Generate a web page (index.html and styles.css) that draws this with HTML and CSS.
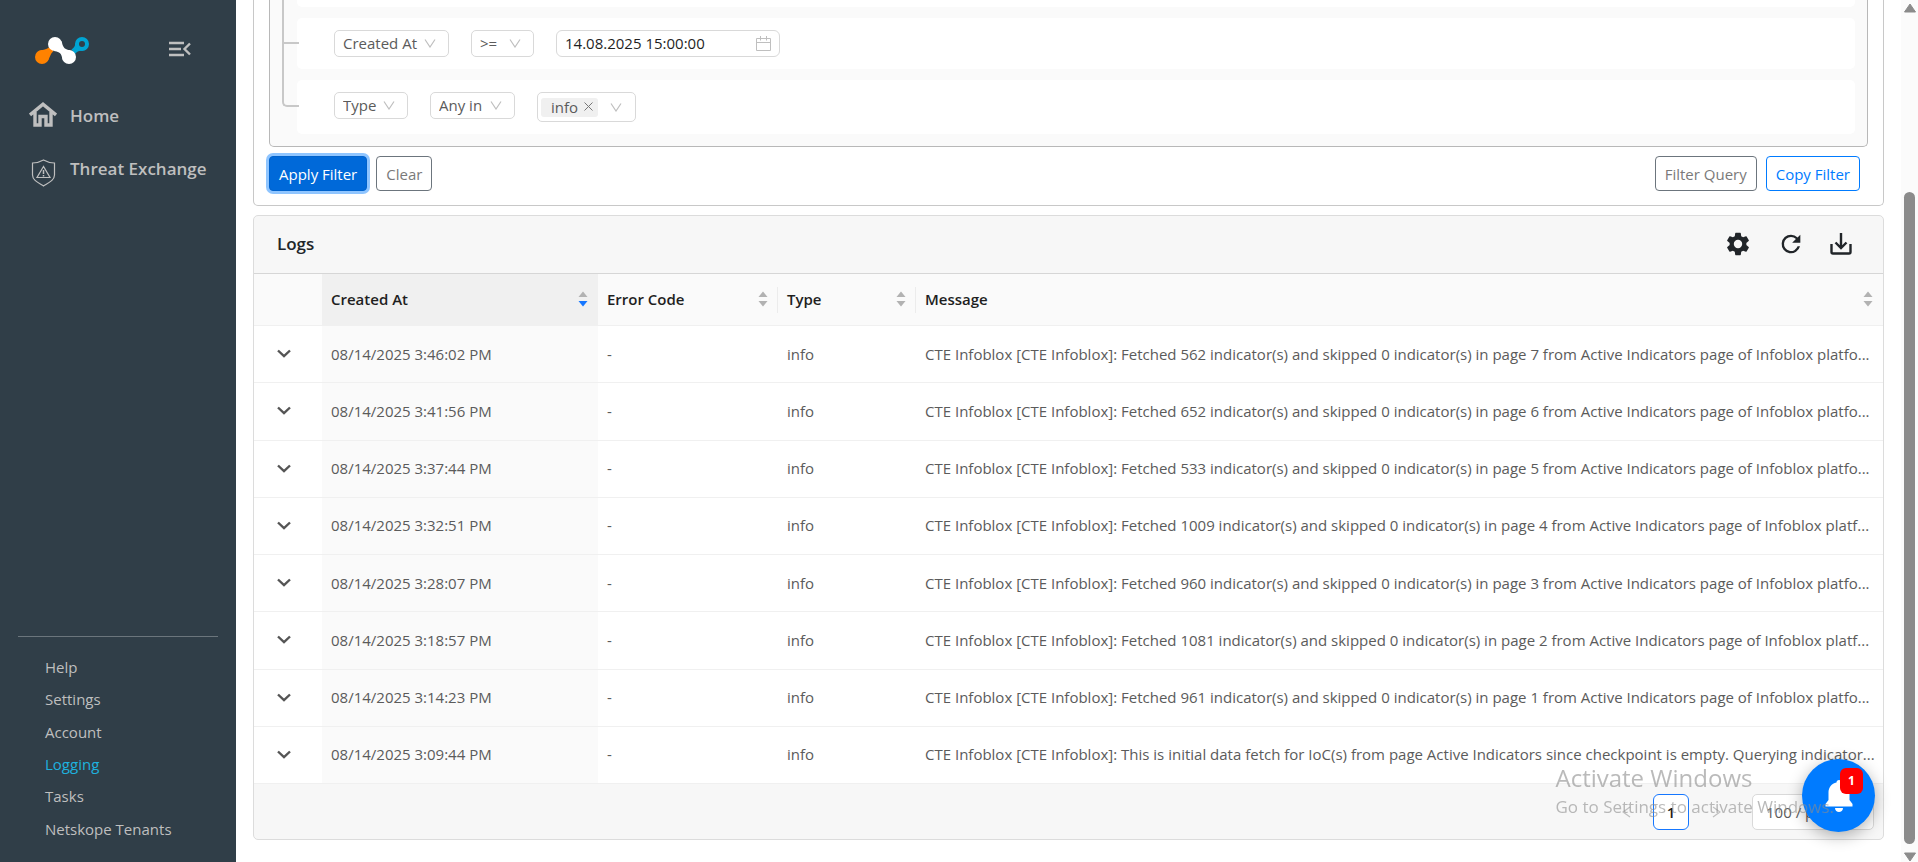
FILE: index.html
```html
<!DOCTYPE html>
<html lang="en">
<head>
  <meta charset="utf-8">
  <title>Logging</title>
  <link rel="stylesheet" href="styles.css">
</head>
<body>
  <svg class="defs" aria-hidden="true">
    <symbol id="chevron" viewBox="0 0 14 9"><path d="M1 1.500L7 7.200L13 1.500" fill="none" stroke="#555" stroke-width="2.400"/></symbol>
    <symbol id="sorter" viewBox="0 0 10 16"><path class="up" d="M5 0.500L9.500 6H0.500Z"/><path class="down" d="M5 15.500L9.500 10H0.500Z"/></symbol>
  </svg>

  <div class="layout">
    <aside class="sidebar">
      <div class="brand">
        <svg class="logo" width="54" height="27" viewBox="0 0 54 27">
          <path d="M3 15C7 12 11 13.500 14.500 10L18.500 14C15 17 15.500 20 12 24.500Z" fill="#ff8200"/>
          <circle cx="7" cy="20" r="7" fill="#ff8200"/>
          <path d="M36.500 12.500C40.500 10 40 7 42 3L51 12C47 15 44 12 40 17Z" fill="#00a4d3"/>
          <circle cx="47" cy="7" r="7" fill="#00a4d3"/>
          <circle cx="47" cy="7" r="3" fill="#303e48"/>
          <path d="M26.500 4C28 9 28 12 35 13.500L40.500 20L28 23C26 18 27 15 19 14Z" fill="#fff"/>
          <circle cx="20" cy="7" r="7" fill="#fff"/>
          <circle cx="34" cy="20" r="7" fill="#fff"/>
        </svg>
        <button class="icon-button" aria-label="Collapse menu">
          <svg width="22" height="16" viewBox="0 0 22 16" fill="none" stroke="#bfbfbf" stroke-width="2.400"><path d="M0 2H15M0 8H12M0 14H15M21 2.500L15.500 8L21 13.500"/></svg>
        </button>
      </div>

      <nav class="main-nav">
        <a href="#home">
          <svg width="28" height="26" viewBox="0 0 28 26" fill="none" stroke="#bfbfbf" stroke-width="3.400"><path d="M1 13L14 2.300L27 13M6 10V23H11V14.500H17V23H22V10"/></svg>
          Home
        </a>
        <a href="#threat-exchange" class="threat">
          <svg width="28" height="28" viewBox="0 0 28 28" fill="none" stroke="#bfbfbf" stroke-width="1.200"><path d="M14.500 1C11 3 7 4 3.500 4V16C3.500 21 9 23.500 14.500 27C20 23.500 25.500 21 25.500 16V4C22 4 18 3 14.500 1ZM14.500 7.500L8 18.500H21Z"/><path d="M14.500 11V15M14.500 16V17.500" stroke-width="1.500"/></svg>
          Threat Exchange
        </a>
      </nav>

      <nav class="sub-nav">
        <a href="#help">Help</a>
        <a href="#settings">Settings</a>
        <a href="#account">Account</a>
        <a href="#logging" class="active">Logging</a>
        <a href="#tasks">Tasks</a>
        <a href="#tenants">Netskope Tenants</a>
      </nav>
    </aside>

    <main class="content">
      <section class="filter-card">
        <div class="rule-group">
          <div class="rule rule-cut"></div>
          <div class="rule">
            <select class="field-select" aria-label="Field"><option>Created At</option></select>
            <select class="operator-select" aria-label="Operator"><option>&gt;=</option></select>
            <div class="date-picker">
              <input type="text" value="14.08.2025 15:00:00" aria-label="Date">
              <svg width="15" height="15" viewBox="0 0 15 15" fill="none" stroke="#bfbfbf"><path d="M0.500 2.500H14.500V14.500H0.500ZM0.500 6.500H14.500M4.500 0V4.500M10.500 0V4.500"/></svg>
            </div>
          </div>
          <div class="rule rule-last">
            <select class="type-select" aria-label="Field"><option>Type</option></select>
            <select class="any-select" aria-label="Operator"><option>Any in</option></select>
            <div class="multi-select">
              <span class="tag">info
                <button aria-label="Remove info"><svg width="9" height="9" viewBox="0 0 9 9" fill="none" stroke="#777"><path d="M0.500 0.500L8.500 8.500M8.500 0.500L0.500 8.500"/></svg></button>
              </span>
              <svg width="12" height="9" viewBox="0 0 12 9" fill="none" stroke="#bfbfbf" stroke-width="1.200"><path d="M1 0.500L6 8L11 0.500"/></svg>
            </div>
          </div>
        </div>
        <div class="filter-actions">
          <button class="btn btn-primary">Apply Filter</button>
          <button class="btn">Clear</button>
          <button class="btn btn-query">Filter Query</button>
          <button class="btn btn-outline-primary">Copy Filter</button>
        </div>
      </section>

      <section class="logs-card">
        <header class="logs-header">
          <h2>Logs</h2>
          <div class="logs-tools">
            <button class="icon-button" aria-label="Table settings">
              <svg width="28" height="28" viewBox="0 0 24 24" fill="#212529"><path d="M19.140 12.940c.04-.3.06-.61.06-.94 0-.32-.02-.64-.07-.94l2.030-1.580c.18-.14.23-.41.12-.61l-1.920-3.320c-.12-.22-.37-.29-.59-.22l-2.390.96c-.5-.38-1.030-.7-1.620-.94l-.36-2.540c-.04-.24-.24-.41-.48-.41h-3.840c-.24 0-.43.17-.47.41l-.36 2.540c-.59.24-1.130.57-1.620.94l-2.390-.96c-.22-.08-.47 0-.59.22L2.740 8.870c-.12.21-.08.47.12.61l2.030 1.580c-.05.3-.09.63-.09.94s.02.64.07.94l-2.030 1.580c-.18.14-.23.41-.12.61l1.920 3.320c.12.22.37.29.59.22l2.390-.96c.5.38 1.030.7 1.620.94l.36 2.540c.05.24.24.41.48.41h3.840c.24 0 .44-.17.47-.41l.36-2.540c.59-.24 1.130-.56 1.620-.94l2.390.96c.22.08.47 0 .59-.22l1.920-3.320c.12-.22.07-.47-.12-.61zM12 15.600a3.600 3.600 0 1 1 0-7.200 3.600 3.600 0 0 1 0 7.200z"/></svg>
            </button>
            <button class="icon-button" aria-label="Refresh">
              <svg width="28" height="28" viewBox="0 0 24 24" fill="#212529"><path d="M17.650 6.350A7.960 7.960 0 0 0 12 4a8 8 0 1 0 7.730 10h-2.080A6 6 0 1 1 12 6c1.660 0 3.140.69 4.220 1.780L13 11h7V4z"/></svg>
            </button>
            <button class="icon-button" aria-label="Download">
              <svg width="22" height="22" viewBox="0 0 22 22" fill="none" stroke="#212529" stroke-width="2.400"><path d="M11 0V14.500M5.500 9.500L11 15L16.500 9.500M1.500 11V19Q1.500 20.500 3 20.500H19Q20.500 20.500 20.500 19V11"/></svg>
            </button>
          </div>
        </header>

        <table class="logs-table">
          <colgroup>
            <col class="col-expand"><col class="col-created"><col class="col-code"><col class="col-type"><col>
          </colgroup>
          <thead>
            <tr>
              <th></th>
              <th class="sorted"><div>Created At <svg class="sorter desc"><use href="#sorter"/></svg></div></th>
              <th class="split"><div>Error Code <svg class="sorter"><use href="#sorter"/></svg></div></th>
              <th class="split"><div>Type <svg class="sorter"><use href="#sorter"/></svg></div></th>
              <th><div>Message <svg class="sorter"><use href="#sorter"/></svg></div></th>
            </tr>
          </thead>
          <tbody>
            <tr>
              <td><button class="expand" aria-label="Expand row"><svg><use href="#chevron"/></svg></button></td>
              <td class="sorted">08/14/2025 3:46:02 PM</td><td>-</td><td>info</td>
              <td class="message">CTE Infoblox [CTE Infoblox]: Fetched 562 indicator(s) and skipped 0 indicator(s) in page 7 from Active Indicators page of Infoblox platfo...</td>
            </tr>
            <tr>
              <td><button class="expand" aria-label="Expand row"><svg><use href="#chevron"/></svg></button></td>
              <td class="sorted">08/14/2025 3:41:56 PM</td><td>-</td><td>info</td>
              <td class="message">CTE Infoblox [CTE Infoblox]: Fetched 652 indicator(s) and skipped 0 indicator(s) in page 6 from Active Indicators page of Infoblox platfo...</td>
            </tr>
            <tr>
              <td><button class="expand" aria-label="Expand row"><svg><use href="#chevron"/></svg></button></td>
              <td class="sorted">08/14/2025 3:37:44 PM</td><td>-</td><td>info</td>
              <td class="message">CTE Infoblox [CTE Infoblox]: Fetched 533 indicator(s) and skipped 0 indicator(s) in page 5 from Active Indicators page of Infoblox platfo...</td>
            </tr>
            <tr>
              <td><button class="expand" aria-label="Expand row"><svg><use href="#chevron"/></svg></button></td>
              <td class="sorted">08/14/2025 3:32:51 PM</td><td>-</td><td>info</td>
              <td class="message">CTE Infoblox [CTE Infoblox]: Fetched 1009 indicator(s) and skipped 0 indicator(s) in page 4 from Active Indicators page of Infoblox platf...</td>
            </tr>
            <tr>
              <td><button class="expand" aria-label="Expand row"><svg><use href="#chevron"/></svg></button></td>
              <td class="sorted">08/14/2025 3:28:07 PM</td><td>-</td><td>info</td>
              <td class="message">CTE Infoblox [CTE Infoblox]: Fetched 960 indicator(s) and skipped 0 indicator(s) in page 3 from Active Indicators page of Infoblox platfo...</td>
            </tr>
            <tr>
              <td><button class="expand" aria-label="Expand row"><svg><use href="#chevron"/></svg></button></td>
              <td class="sorted">08/14/2025 3:18:57 PM</td><td>-</td><td>info</td>
              <td class="message">CTE Infoblox [CTE Infoblox]: Fetched 1081 indicator(s) and skipped 0 indicator(s) in page 2 from Active Indicators page of Infoblox platf...</td>
            </tr>
            <tr>
              <td><button class="expand" aria-label="Expand row"><svg><use href="#chevron"/></svg></button></td>
              <td class="sorted">08/14/2025 3:14:23 PM</td><td>-</td><td>info</td>
              <td class="message">CTE Infoblox [CTE Infoblox]: Fetched 961 indicator(s) and skipped 0 indicator(s) in page 1 from Active Indicators page of Infoblox platfo...</td>
            </tr>
            <tr>
              <td><button class="expand" aria-label="Expand row"><svg><use href="#chevron"/></svg></button></td>
              <td class="sorted">08/14/2025 3:09:44 PM</td><td>-</td><td>info</td>
              <td class="message">CTE Infoblox [CTE Infoblox]: This is initial data fetch for IoC(s) from page Active Indicators since checkpoint is empty. Querying indicator...</td>
            </tr>
          </tbody>
        </table>

        <footer class="pagination">
          <button class="page-arrow" aria-label="Previous page"><svg width="9" height="12" viewBox="0 0 9 12" fill="none" stroke="#bfbfbf" stroke-width="1.300"><path d="M8 1L1 6L8 11"/></svg></button>
          <button class="page-current">1</button>
          <button class="page-arrow" aria-label="Next page"><svg width="9" height="12" viewBox="0 0 9 12" fill="none" stroke="#bfbfbf" stroke-width="1.300"><path d="M1 1L8 6L1 11"/></svg></button>
          <select class="page-size" aria-label="Page size"><option>100 / page</option></select>
        </footer>
      </section>
    </main>

    <div class="scrollbar">
      <svg width="12" height="10" viewBox="0 0 12 10"><path d="M6 1L11.500 9H0.500Z" fill="#8b8b8b" stroke="#8b8b8b" stroke-linejoin="round"/></svg>
      <div class="thumb"></div>
      <svg width="12" height="10" viewBox="0 0 12 10"><path d="M6 9L11.500 1H0.500Z" fill="#8b8b8b" stroke="#8b8b8b" stroke-linejoin="round"/></svg>
    </div>
  </div>

  <button class="bell" aria-label="Notifications">
    <svg width="28" height="32" viewBox="0 0 28 32" fill="#fff"><path d="M14 0C12.500 0 11.500 1 11.500 2.500C6.500 3.500 3.500 7.500 3.500 12.500V20L0.500 24V26.500H27.500V24L24.500 20V12.500C24.500 7.500 21.500 3.500 16.500 2.500C16.500 1 15.500 0 14 0ZM10 28H18C18 30.500 16 32 14 32C12 32 10 30.500 10 28Z"/></svg>
    <span class="badge">1</span>
  </button>

  <div class="watermark">
    <div class="watermark-title">Activate Windows</div>
    <div>Go to Settings to activate Windows.</div>
  </div>
</body>
</html>
```
FILE: styles.css
```css
* {
  box-sizing: border-box;
}
body {
  margin: 0;
  font-family: "Open Sans", "Noto Sans", sans-serif;
  font-size: 15px;
  line-height: 22px;
  color: #5b5b5b;
  background: #fff;
}
button, select, input {
  font: inherit;
  color: inherit;
}
button {
  cursor: pointer;
}
a {
  color: inherit;
  text-decoration: none;
}
svg {
  display: block;
  flex: none;
}
.defs {
  position: absolute;
  width: 0;
  height: 0;
}
.layout {
  display: flex;
  min-height: 100vh;
}
.icon-button {
  padding: 0;
  border: 0;
  background: none;
}

/* sidebar */
.sidebar {
  display: flex;
  flex-direction: column;
  flex: none;
  width: 236px;
  padding: 37px 18px 15px;
  background: #303e48;
  color: #bfbfbf;
}
.brand {
  display: flex;
  align-items: flex-start;
  justify-content: space-between;
  padding: 0 27px 0 17px;
}
.brand .icon-button {
  margin-top: 4px;
}
.main-nav {
  display: flex;
  flex-direction: column;
  gap: 25px;
  margin-top: 38px;
  padding-left: 11px;
  font-size: 17px;
  font-weight: 600;
  line-height: 28px;
}
.main-nav a {
  display: flex;
  gap: 13px;
  white-space: nowrap;
}
.main-nav .threat svg {
  margin-top: 4px;
}
.sub-nav {
  display: grid;
  grid-auto-rows: 1fr;
  align-items: center;
  height: 212px;
  margin-top: auto;
  padding: 14px 0 3px 27px;
  border-top: 1px solid #6b757c;
}
.sub-nav .active {
  color: #1eb1df;
}

/* filter */
.content {
  flex: 1;
  min-width: 0;
  padding: 0 17px 23px;
}
.filter-card {
  padding: 0 15px 14px;
  border: 1px solid #c8c8c8;
  border-top: 0;
  border-radius: 0 0 5px 5px;
}
.rule-group {
  display: flex;
  flex-direction: column;
  gap: 11px;
  padding: 0 12px 12px 27px;
  border: 1px solid #b8b8b8;
  border-top: 0;
  border-radius: 0 0 5px 5px;
  background: #fafafa;
}
.rule {
  position: relative;
  display: flex;
  align-items: flex-start;
  gap: 22px;
  height: 51px;
  padding: 12px 37px;
  border-radius: 5px;
  background: #fff;
}
.rule-cut {
  height: 7px;
  padding: 0;
  border-radius: 0 0 5px 5px;
}
.rule::before {
  content: "";
  position: absolute;
  left: -15px;
  top: -38px;
  bottom: 50%;
  width: 15px;
  border: solid #c8c8c8;
  border-width: 0 0 2px 2px;
}
.rule-cut::before {
  top: 0;
  bottom: -11px;
  border-bottom: 0;
}
.rule-last {
  height: 54px;
}
.rule-last::before {
  border-radius: 0 0 0 5px;
}
select {
  appearance: none;
  height: 27px;
  padding: 0 8px 2px;
  border: 1px solid #d9d9d9;
  border-radius: 5px;
  background: #fff url("data:image/svg+xml,%3Csvg width='12' height='9' viewBox='0 0 12 9' fill='none' xmlns='http://www.w3.org/2000/svg'%3E%3Cpath d='M1 .5L6 8L11 .5' stroke='%23bfbfbf' stroke-width='1.2'/%3E%3C/svg%3E") no-repeat right 12px center;
}
.field-select {
  width: 115px;
}
.operator-select {
  width: 63px;
}
.type-select {
  width: 74px;
}
.any-select {
  width: 85px;
}
.date-picker {
  display: flex;
  align-items: center;
  width: 224px;
  height: 27px;
  padding: 0 8px;
  border: 1px solid #d9d9d9;
  border-radius: 6px;
}
.date-picker input {
  flex: 1;
  min-width: 0;
  padding: 0 0 2px;
  border: 0;
  outline: 0;
  color: #1f1f1f;
}
.multi-select {
  display: flex;
  align-items: center;
  justify-content: space-between;
  width: 99px;
  height: 30px;
  padding: 0 13px 0 3px;
  border: 1px solid #d9d9d9;
  border-radius: 5px;
}
.tag {
  display: flex;
  align-items: flex-start;
  gap: 6px;
  padding: 0 5px 0 10px;
  border-radius: 3px;
  background: #f0f0f0;
  line-height: 19px;
}
.tag button {
  padding: 4px 0 0;
  border: 0;
  background: none;
}
.filter-actions {
  display: flex;
  gap: 9px;
  padding: 9px 8px 0 0;
}
.btn {
  height: 35px;
  padding: 0 9px;
  border: 1px solid #6c757d;
  border-radius: 4px;
  background: #fff;
  color: #7a7a7a;
}
.btn-primary {
  border-color: #0062cc;
  background: #0069d9;
  color: #fff;
  box-shadow: 0 0 0 3px #8fc5ff;
}
.btn-query {
  margin-left: auto;
}
.btn-outline-primary {
  border-color: #007bff;
  color: #007bff;
}

/* logs */
.logs-card {
  margin-top: 9px;
  border: 1px solid #dcdcdc;
  border-radius: 5px;
  background: #f7f7f7;
}
.logs-header {
  display: flex;
  align-items: center;
  justify-content: space-between;
  height: 58px;
  padding: 0 31px 2px 23px;
  border-bottom: 1px solid #d6d6d6;
}
.logs-header h2 {
  margin: 0;
  font-size: 17px;
  font-weight: 600;
  color: #212529;
}
.logs-tools {
  display: flex;
  align-items: center;
  gap: 25px;
}
.logs-table {
  width: 100%;
  height: 510px;
  table-layout: fixed;
  border-spacing: 0;
  background: #fff;
}
.col-expand {
  width: 68px;
}
.col-created {
  width: 276px;
}
.col-code {
  width: 180px;
}
.col-type {
  width: 138px;
}
.logs-table th, .logs-table td {
  height: 57px;
  padding: 0 9px 1px;
  border-bottom: 1px solid #f0f0f0;
  text-align: left;
  white-space: nowrap;
  overflow: hidden;
  text-overflow: ellipsis;
}
.logs-table th {
  height: 52px;
  background: #fafafa;
  color: #1f1f1f;
  font-weight: 600;
}
.logs-table .message {
  padding-right: 3px;
}
.logs-table th div {
  display: flex;
  align-items: center;
  justify-content: space-between;
}
.logs-table th.sorted {
  background: #f0f0f0;
}
.logs-table td.sorted {
  background: #fafafa;
}
.logs-table th.split {
  background: linear-gradient(#ececec, #ececec) no-repeat right center / 1px 26px #fafafa;
}
.sorter {
  width: 10px;
  height: 16px;
  margin-right: 1px;
  fill: #b2b2b2;
}
.down {
  fill: var(--down, #b2b2b2);
}
.desc {
  --down: #1677ff;
}
.expand {
  display: block;
  padding: 0 0 0 14px;
  border: 0;
  background: none;
}
.expand svg {
  width: 14px;
  height: 9px;
}
.pagination {
  display: flex;
  align-items: center;
  justify-content: flex-end;
  height: 55px;
  padding: 0 9px;
}
.page-arrow {
  display: flex;
  justify-content: center;
  width: 36px;
  margin: 0 9px;
  padding: 0;
  border: 0;
  background: none;
}
.page-current {
  width: 36px;
  height: 36px;
  padding: 0;
  border: 1px solid #1677ff;
  border-radius: 6px;
  background: #fff;
  color: #1f1f1f;
  font-weight: 600;
}
.page-size {
  width: 122px;
  height: 36px;
  margin-left: 9px;
  padding: 0 13px;
}

/* scrollbar */
.scrollbar {
  display: flex;
  flex-direction: column;
  align-items: center;
  flex: none;
  width: 17px;
  padding: 3px 0 1px;
  background: #fbfbfb;
}
.thumb {
  flex: 1;
  width: 11px;
  margin: 179px 0 8px;
  border-radius: 6px;
  background: #8b8b8b;
}

/* floating items */
.bell {
  position: fixed;
  right: 43px;
  bottom: 30px;
  display: flex;
  align-items: center;
  justify-content: center;
  width: 73px;
  height: 73px;
  padding: 0;
  border: 0;
  border-radius: 50%;
  background: #007bff;
  box-shadow: 0 4px 16px rgba(0, 0, 0, 0.3);
}
.badge {
  position: absolute;
  top: 9px;
  right: 12px;
  width: 23px;
  border-radius: 6px;
  background: #f00;
  color: #fff;
  font-size: 12px;
  font-weight: 700;
  line-height: 26px;
}
.watermark {
  position: fixed;
  right: 84px;
  bottom: 43px;
  color: rgba(140, 140, 140, 0.6);
  font-size: 17px;
  line-height: 24px;
  pointer-events: none;
}
.watermark-title {
  font-size: 24px;
  line-height: 34px;
}
```
